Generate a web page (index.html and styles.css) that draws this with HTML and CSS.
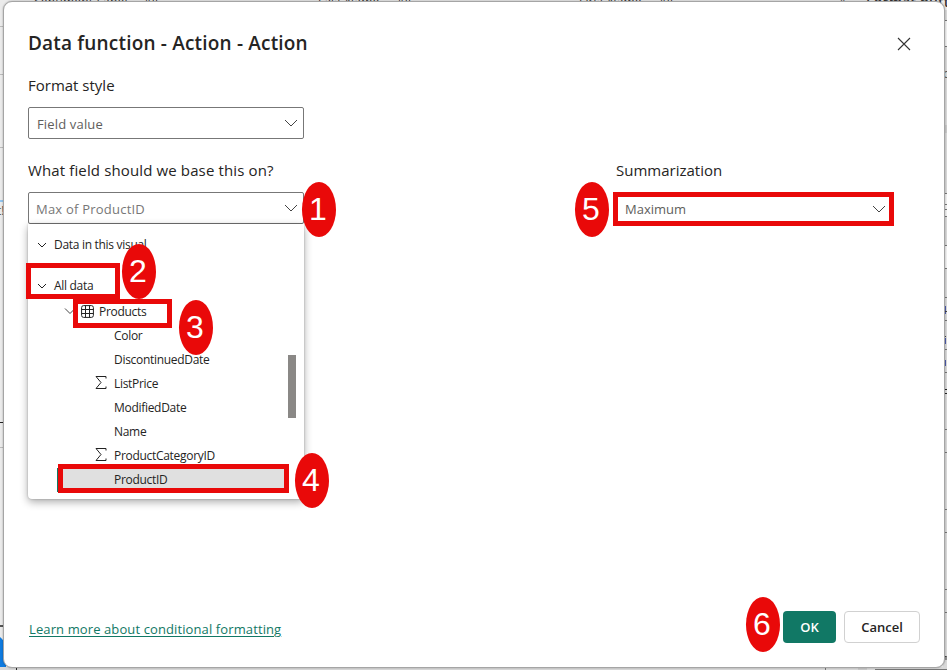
FILE: index.html
```
<!DOCTYPE html>
<html lang="en">
<head>
<meta charset="utf-8">
<title>Data function - Action - Action</title>
<link rel="stylesheet" href="styles.css">
</head>
<body>
<div class="report">
  <div class="filters"><span>Sentiment Label</span><span>All</span><span>Last Name</span><span>All</span><span>First Name</span><span>All</span><span>«</span><b>Format button</b></div>
  <svg class="edges" width="947" height="670" viewBox="0 0 947 670">
    <path fill="#d9d9d9" d="M943 10h4v660h-4zM0 667h947v3H0z"/>
    <path fill="#c9c9c9" d="M943 125h4v8h-4zM858 667h9v3h-9z"/>
    <path fill="#f0f0f0" d="M943 20h4v26h-4zM943 194h4v22h-4zM943 245h4v23h-4z"/>
    <path stroke="#777" d="M943 20.500h4M943 46.500h4M943 193.500h4M943 204.500h4M943 209.500h4M943 216.500h4M943 245.500h4M943 268.500h4M943 297.500h4M943 320.500h4M943 349.500h4M943 372.500h4M943 429.500h4M943 452.500h4M943 509.500h4M943 532.500h4M943 589.500h4M943 612.500h4M825.500 667v3M875 669.500h72"/>
    <path stroke="#222" d="M943 389.500h4M943 393.500h4M0 422.500h4M16.500 667v3"/>
    <path stroke="#bbb" d="M0 26.500h4M0 74.500h4M0 147.500h4M0 447.500h4"/>
    <path stroke="#92c5f0" stroke-width="2" d="M0 201h4"/>
    <path stroke="#555" stroke-width="2" d="M0 626h4"/>
    <path stroke="#4d5cad" d="M945.500 306v8M945.500 338v6M945.500 360v6"/>
    <path stroke="#444" d="M945 311.500h2M943 336.500h3M946 656v4M943.500 656.500h3"/>
    <path fill="#0f7be0" d="M0 637Q4 640 6 646V667H0z"/>
  </svg>
  <span class="peek peek-left">t!</span>
  <span class="peek peek-right">o</span>
</div>

<main class="dialog">
  <header class="head">
    <h1>Data function - Action - Action</h1>
    <svg class="close" width="14" height="14" viewBox="0 0 14 14"><path d="M1 1l12 12M13 1L1 13"/></svg>
  </header>
  <label class="label">Format style</label>
  <div class="select"><span class="value">Field value</span><svg class="chev" width="14" height="8" viewBox="0 0 14 8"><path d="M1 1l6 6 6-6"/></svg></div>
  <div class="fields">
    <section class="field">
      <label class="label base">What field should we base this on?</label>
      <div class="select"><span class="value max">Max of ProductID</span><svg class="chev" width="14" height="8" viewBox="0 0 14 8"><path d="M1 1l6 6 6-6"/></svg><i class="badge b1">1</i></div>
      <div class="menu">
        <div class="group"><svg class="small" width="10" height="6" viewBox="0 0 10 6"><path d="M1 1l4 4 4-4"/></svg><span>Data in this visual</span></div>
        <div class="group all"><svg class="small" width="10" height="6" viewBox="0 0 10 6"><path d="M1 1l4 4 4-4"/></svg><span>All data</span></div>
        <div class="table"><svg width="12" height="7" viewBox="0 0 12 7"><path d="M1 .5l5 5 5-5"/></svg><svg class="grid" width="13" height="13" viewBox="0 0 13 13"><rect x=".6" y=".6" width="11.800" height="11.800" rx="2"/><path d="M4.500.5v12M8.500.5v12M.5 4.500h12M.5 8.500h12"/></svg><span>Products</span></div>
        <div class="item"><span>Color</span></div>
        <div class="item"><span>DiscontinuedDate</span></div>
        <div class="item"><svg class="sigma" width="12" height="13" viewBox="0 0 12 13"><path d="M11 2.500V.5H1l5 6-5 6h10v-2"/></svg><span>ListPrice</span></div>
        <div class="item"><span>ModifiedDate</span></div>
        <div class="item"><span>Name</span></div>
        <div class="item"><svg class="sigma" width="12" height="13" viewBox="0 0 12 13"><path d="M11 2.500V.5H1l5 6-5 6h10v-2"/></svg><span>ProductCategoryID</span></div>
        <div class="item selected"><span>ProductID</span></div>
        <i class="thumb"></i>
        <i class="mark m2"></i><i class="mark m3"></i><i class="mark m4"></i>
        <i class="badge b2">2</i><i class="badge b3">3</i><i class="badge b4">4</i>
      </div>
    </section>
    <section class="field">
      <label class="label">Summarization</label>
      <div class="select summary"><span class="value">Maximum</span><svg class="chev" width="14" height="8" viewBox="0 0 14 8"><path d="M1 1l6 6 6-6"/></svg><i class="badge b5">5</i></div>
    </section>
  </div>
  <footer class="foot">
    <a href="#">Learn more about conditional formatting</a>
    <div class="actions"><i class="badge b6">6</i><button class="ok">OK</button><button class="cancel">Cancel</button></div>
  </footer>
</main>
</body>
</html>
```
FILE: styles.css
```
* { box-sizing: border-box; }
body { margin: 0; width: 947px; height: 670px; overflow: hidden; position: relative; background: #ebebeb; color: #252423; font-family: "Open Sans", "Noto Sans", sans-serif; }
svg { display: block; flex: none; fill: none; stroke: #444; stroke-width: 1; }
.report { position: absolute; inset: 0; overflow: hidden; }
.filters { display: grid; grid-template-columns: 110px 174px 79px 182px 80px 180px 27px 90px; padding-left: 34px; margin-top: -6px; height: 18px; font-size: 12px; line-height: 16px; letter-spacing: .2px; white-space: nowrap; color: #333; }
.filters b { font-size: 14px; font-weight: 600; }
.edges { position: absolute; left: 0; top: 0; stroke: none; }
.peek { position: absolute; font-size: 12px; line-height: 16px; color: #555; }
.peek-left { left: -3px; top: 203px; }
.peek-right { left: 943px; top: 66px; }

.dialog { position: absolute; left: 3px; top: 1px; width: 942px; height: 667px; padding: 24px; background: #fff; border: 1px solid #a5a5a5; border-radius: 9px; box-shadow: 0 0 2px #0005; display: flex; flex-direction: column; }
.head { display: flex; justify-content: space-between; align-items: center; height: 34px; padding-right: 9px; }
h1 { margin: 0; font-size: 19px; line-height: 30px; font-weight: 600; letter-spacing: .18px; white-space: nowrap; }
.close { stroke: #333; stroke-width: 1.100; margin-top: 2px; }
.label { display: block; height: 22px; margin: 14px 0 11px; font-size: 15px; line-height: 22px; white-space: nowrap; }
.base { letter-spacing: .13px; }
.select { position: relative; width: 276px; height: 32px; padding: 0 5px 0 8px; border: 1px solid #777; border-radius: 2px; display: flex; align-items: center; justify-content: space-between; font-size: 13px; letter-spacing: .16px; color: #605e5c; }
.value { line-height: 20px; padding-top: 2px; white-space: nowrap; }
.max { color: #777; margin-left: -1px; letter-spacing: .22px; }
.fields { display: flex; gap: 309px; margin-top: 6px; }
.field { position: relative; }
.field:last-child .label { margin-left: 3px; }
.summary { width: 281px; height: 34px; padding: 0 3px 0 7px; border: 5px solid #e90909; border-radius: 0; letter-spacing: 0; }
.summary .value { padding-top: 0; }
.menu { position: absolute; left: 0; top: 79px; width: 276px; height: 275px; background: #fff; border-radius: 0 0 4px 4px; box-shadow: 0 3px 8px #0005, 0 0 2px #0004; font-size: 12px; line-height: 24px; letter-spacing: -.3px; padding-top: 9px; white-space: nowrap; }
.group { display: flex; align-items: center; gap: 7px; height: 24px; padding-left: 9px; }
.group.all { margin-top: 17px; }
.small { stroke: #222; }
.table { display: flex; align-items: center; height: 26px; padding: 1px 0 0 36px; }
.table .grid { margin: 0 5px; stroke: #222; }
.item { position: relative; height: 24px; padding-left: 86px; }
.sigma { position: absolute; left: 67px; top: 4px; stroke: #222; }
.selected { margin-left: 29px; margin-right: 16px; padding-left: 57px; background: #e0e0e0; border-left: 1px solid #117865; }
.selected span { margin-left: -1px; }
.thumb { position: absolute; left: 260px; top: 131px; width: 8px; height: 63px; background: #8a8886; }
.mark { position: absolute; border: 5px solid #e90909; }
.m2 { left: -2px; top: 39px; width: 94px; height: 36px; }
.m3 { left: 45px; top: 75px; width: 99px; height: 29px; }
.m4 { left: 30px; top: 240px; width: 231px; height: 29px; }
.badge { position: absolute; width: 34px; height: 55px; padding-right: 2px; border-radius: 50%; background: #e90909; color: #fff; font: normal 32px/54px "Liberation Sans", Arial, sans-serif; text-align: center; letter-spacing: 0; z-index: 2; }
.b1 { left: 273px; top: -11px; }
.b2 { left: 94px; top: 20px; }
.b3 { left: 151px; top: 76px; }
.b4 { left: 267px; top: 229px; }
.b5 { left: -43px; top: -15px; }
.b6 { left: -37px; top: -14px; }
.foot { margin-top: auto; display: flex; align-items: center; justify-content: space-between; }
.foot a { margin-left: 1px; font-size: 13px; color: #117865; letter-spacing: .11px; margin-top: 4px; text-underline-offset: 2px; white-space: nowrap; }
.actions { position: relative; display: flex; gap: 8px; }
button { height: 32px; padding: 0; border-radius: 4px; font: 600 13px/20px "Open Sans", sans-serif; }
.ok { width: 53px; background: #117865; color: #fff; border: 0; }
.cancel { width: 76px; background: #fff; color: #252423; border: 1px solid #d1d1d1; }
```
